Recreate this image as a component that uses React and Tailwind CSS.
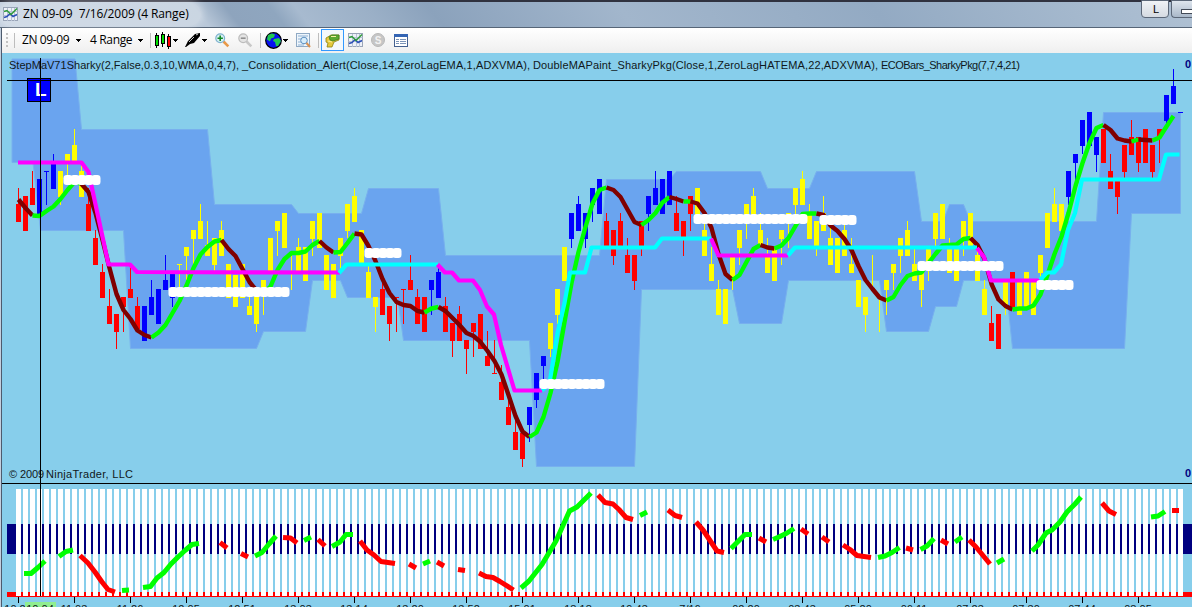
import React from "react";

const BAR = 7;
const FIRST = 16;
const R = "#ff0000";
const B = "#0000ff";
const Y = "#ffff00";

// [colour, high, body top, body bottom, low], one row per bar
const candles = [
  [R,188,204,222,222],[R,196,196,231,231],[R,171,188,205,205],[B,179,179,214,214],[B,171,171,172,205],
  [B,154,163,189,189],[Y,171,171,197,205],[Y,154,154,162,176],[Y,129,145,163,163],[Y,165,171,197,197],
  [R,188,204,231,231],[R,230,238,265,265],[R,264,272,298,298],[R,289,306,324,324],[R,314,314,332,349],
  [R,297,297,307,332],[R,267,289,298,298],[R,297,306,329,329],[B,306,306,341,341],[B,280,297,315,315],
  [B,289,289,324,324],[B,255,280,290,290],[B,273,273,298,307],[Y,264,264,265,287],[Y,247,247,256,280],
  [Y,230,230,239,264],[Y,204,221,239,239],[Y,221,245,256,256],[Y,238,238,265,271],[Y,221,230,256,256],
  [Y,264,264,298,298],[Y,275,275,307,307],[Y,264,264,298,298],[Y,297,306,315,315],[Y,290,290,324,332],
  [Y,280,280,290,315],[Y,238,238,271,271],[Y,221,221,231,256],[Y,213,213,248,248],[Y,253,255,256,290],
  [Y,238,247,271,271],[Y,247,247,281,281],[Y,221,221,239,256],[Y,213,213,248,248],[Y,255,255,290,290],
  [Y,264,264,298,298],[Y,238,238,256,270],[Y,204,204,231,238],[Y,188,196,222,222],[Y,230,230,263,263],
  [Y,266,272,298,298],[Y,297,297,307,332],[R,282,289,315,315],[R,306,306,324,341],[R,297,297,298,332],
  [R,289,289,290,324],[R,255,280,290,290],[R,289,297,324,324],[R,297,297,332,332],[B,280,280,290,315],
  [B,267,272,298,298],[R,297,306,332,332],[R,323,323,341,357],[R,306,314,341,341],[R,340,340,349,374],
  [R,323,323,332,357],[R,314,314,349,349],[R,331,356,366,366],[R,340,373,374,374],[R,365,382,400,400],
  [R,398,407,425,425],[R,420,432,450,450],[R,433,433,459,467],[B,407,407,425,442],[B,373,373,400,408],
  [B,356,356,366,380],[Y,323,323,349,357],[Y,289,289,315,324],[Y,247,247,281,281],[B,213,213,239,248],
  [B,196,204,231,231],[B,213,213,239,248],[B,188,188,205,222],[B,179,179,214,214],[R,213,221,247,247],
  [R,230,230,256,265],[R,213,221,246,246],[R,238,255,273,273],[R,255,255,281,290],[R,221,221,246,256],
  [B,196,196,214,231],[B,171,188,205,205],[B,179,179,214,214],[B,171,171,205,205],[R,196,213,231,231],
  [R,221,221,237,256],[R,196,196,214,231],[Y,188,188,215,215],[Y,223,230,256,256],[Y,247,264,281,281],
  [Y,280,289,315,315],[Y,289,289,324,324],[Y,257,257,280,290],[Y,230,230,248,265],[Y,204,204,215,239],
  [Y,188,196,215,215],[Y,213,230,245,245],[Y,238,256,273,273],[Y,248,248,281,281],[Y,230,230,239,265],
  [Y,213,213,219,248],[Y,188,188,205,214],[Y,171,179,205,205],[Y,204,215,239,239],[Y,221,221,246,256],
  [Y,196,213,231,231],[Y,226,238,265,265],[Y,238,238,273,273],[Y,225,230,256,256],[Y,238,264,273,273],
  [Y,280,280,307,307],[Y,297,297,315,332],[Y,255,288,289,290],[Y,298,299,300,332],[Y,280,280,290,315],
  [Y,264,264,273,290],[Y,238,238,256,273],[Y,221,230,256,256],[Y,248,264,281,281],[Y,272,272,290,307],
  [Y,249,249,262,281],[Y,213,213,239,246],[Y,204,204,239,239],[Y,238,245,273,273],[Y,245,245,281,281],
  [Y,221,221,239,256],[Y,213,213,246,246],[Y,248,255,281,281],[Y,280,289,315,315],[R,306,323,341,341],
  [R,314,314,349,349],[Y,281,281,307,315],[R,272,272,307,307],[Y,281,281,315,315],[Y,272,272,307,307],
  [Y,281,281,315,315],[Y,255,255,273,281],[Y,213,213,248,248],[Y,188,204,222,222],[Y,204,204,231,231],
  [B,171,171,197,205],[B,154,154,163,180],[B,120,120,146,154],[B,112,112,146,146],[B,137,137,155,172],
  [R,129,129,163,163],[R,154,171,189,189],[R,181,181,197,214],[R,145,145,172,180],[R,120,137,155,155],
  [R,137,137,163,172],[R,129,129,163,163],[R,145,145,172,178],[R,129,129,138,163],[B,95,95,121,130],
  [B,69,86,104,104],[B,112,112,113,113],
];
const thin = new Set([39, 122, 123]);

const band =
  "12,59 75,59 81.5,129.5 207.5,129.5 214.5,204.5 291.5,204.5 298.5,213.5 361.5,213.5 368.5,188.5 438.5,188.5 445.5,255.5 599.5,255.5 606.5,179.5 669.5,179.5 676.5,171.5 760.5,171.5 767.5,188.5 809.5,188.5 816.5,171.5 914.5,171.5 921.5,221.5 943,221.5 949.5,204.5 963.5,204.5 970.5,221.5 1096.5,221.5 1103.5,112.5 1180.5,112.5 1180.5,213.5 1131.5,213.5 1124.5,348.5 1012.5,348.5 1005.5,280.5 963.5,280.5 956.5,306.5 935.5,306.5 928.5,331.5 886.5,331.5 879.5,280.5 788.5,280.5 781.5,323.5 739.5,323.5 732.5,289.5 641.5,289.5 634.5,466.5 536.5,466.5 529.5,340.5 403.5,340.5 397.5,297.5 347.5,297.5 340.5,280.5 312.5,280.5 305.5,331.5 263.5,331.5 256.5,348.5 130.5,348.5 123.5,230.5 40.5,230.5 33,162.5 12,162.5";

// Moving average height at each bar
const ma = [
  199.5,208,215.5,216,211,206.5,199,190,182,184,192,213,240,268,294,310,319,330.5,335,337.5,
  332.5,325,313,301,285.5,268,254.5,247,241.5,240,249,256,269,282,290.5,293,286.5,270,259,253,
  253,251.5,245,241,247.5,252.5,252,243,233.5,234.5,246,261,279,293,302,305,306,311,312.5,308.5,
  307,311,318,325,333,336,342,351,361,374.5,395,416,431.5,437,432.5,417,393,362,322,283,
  252,227,203.5,190,187.5,190,197,209.5,222,225,220,213,202.5,197,199,201.5,201.5,203.5,213,228,
  254,274,280,275,262,249,245,247.5,248.5,245.5,238,226,214,213.5,213.5,215,225.5,231,239,250,
  266,280,289,297.5,300.5,297,285,276,273.5,272.5,263,254,245.5,245,244.5,239,238,245,259,284,
  299.5,306,309.5,308.5,308.5,305.5,294.5,275,254,236.5,213,186,163,143,128,125,130,138.5,140.5,141.5,
  139.5,140,140.5,137.5,126.5,116,
];
// Bars at which the average changes direction, starting downward
const turns = [0,2,9,19,29,35,43,45,48,58,60,73,84,89,93,95,96,102,106,108,114,124,136,142,155,159,160,162,165];

const step = [
  ["#ff00ff", "18,162.5 81.5,162.5 88.5,172 108.5,264.5 130,264.5 137,272 340,272.5"],
  ["#00ffff", "339,273 346.5,264.5 438,264.5"],
  ["#ff00ff", "437.5,264.5 445,272.5 452,272.5 459,280.5 473,280.5 480,290 487,306.5 494,314.5 501,345 514.5,390.5 542,390.5"],
  ["#00ffff", "542,390.5 549.5,383 557.5,333 564.5,303 570,272.5 585,272.5 591.5,247.5 655,247.5 662,238.5 711,238.5"],
  ["#ff00ff", "711,238.5 718.5,255.5 788,255.5"],
  ["#00ffff", "788,255.5 795,247.5 977,247.5"],
  ["#ff00ff", "977,248 984,257 991,280.5 1040,280.5"],
  ["#00ffff", "1040,280 1047,272.5 1054,272.5 1061,264.5 1068,230 1075,213 1082,179.5 1159,179.5 1166,154.5 1179.5,154.5"],
];

// [first bar, last bar, top]
const alerts = [
  [7,11,175],[22,38,287],[50,54,248],[75,83,379],[97,112,214],[115,119,215],[129,140,261],[146,150,280],
];

const up = [
  "24,573.5 31,573.5 38,567.5 45,561","59,556.5 66,551.5 73,550","122,590.5 129,590",
  "143,587.5 150.5,586.5 157,578 164,572.5 171,564 178,557 185,550.5 192,544.5 199,543.5",
  "255,556 262,552.5 269,544 276,536","304,540.5 311,537","332,546.5 340,542 346,534.5 353,534.5",
  "423,564 430,561","521,588 529,581 542,564.5 556,541 569.5,511 577,507 591,493","640,515.5 647,512",
  "731,548.5 745,534.5 752,534.5","773,539.5 780,536.5 787,533 794,528.5",
  "878,557.5 885,556 892,552.5 899.5,547.5","920.5,549.5 927,546 934,538.5","955,542 962,537","997,563 1004,559",
  "1032,551 1038,545 1046,533 1052,530 1060,522 1067,512 1075,504 1081,497","1151,517 1158,516 1165,511.5",
];
const down = [
  "80,555.5 88,563 95,572 102,582 108,589.5 115,592","220,542.5 227,548","241,553.5 248,557",
  "283,537.5 290.5,538 297,543","318,539.5 325,546","360,541 367,550 374,555 381,561.5 395,563.5","409,564 416,568",
  "437,562 444,566","458,569.5 465,570.5","479,573 486,576.5 493,577.5 500,581.5 513.5,590",
  "598,495 605,502.5 613,504 619,509.5 626,517.5 633,519.5","668,510 675,515.5 682,517.5",
  "696,522 703,530 717,551 724,552.5","759,538 766,542","801,529 808,534","822,537 829,542",
  "843,545 850,549.5 857,555.5 871,557.5","906,548 913,550","941,540 948,544","969,540 976,547 990,564",
  "1102,503 1109,511 1116,514.5","1172,510.5 1179,510.5",
];

// [text, x, width]
const studies = [
  ["StepMaV71Sharky(2,False,0.3,10,WMA,0,4,7),", 9, 230],
  ["_Consolidation_Alert(Close,14,ZeroLagEMA,1,ADXVMA),", 242, 288],
  ["DoubleMAPaint_SharkyPkg(Close,1,ZeroLagHATEMA,22,ADXVMA),", 533, 345],
  ["ECOBars_SharkyPkg(7,7,4,21)", 881, 139],
];

const times = [
  "10:2","11:03","11:26","12:05","12:51","13:03","13:14","13:20","13:52","15:01","18:18","19:43",
  "7/16","02:20","03:43","05:20","06:11","07:23","07:30","07:44","08:05",
];

function Chart() {
  return (
    <svg className="block h-[554px] w-[1190px] shrink-0 bg-[#87ceeb]" viewBox="2 53 1190 554">
      <polygon points={band} fill="#6aa4ef" stroke="#78b0ee" strokeWidth="1" />
      <g shapeRendering="crispEdges">
        {candles.map(([c, hi, top, bot, lo], i) => (
          <g key={i} fill={c}>
            <rect x={FIRST + 2 + i * BAR} y={hi} width="1" height={lo - hi} />
            {!thin.has(i) && <rect x={FIRST + i * BAR} y={top} width="5" height={bot - top} />}
          </g>
        ))}
      </g>
      <g fill="none" strokeLinejoin="round">
        {turns.slice(0, -1).map((from, k) => (
          <polyline
            key={from}
            strokeWidth="4.4"
            stroke={k % 2 ? "#00ff00" : "#800000"}
            points={ma
              .slice(from, turns[k + 1] + 1)
              .map((y, j) => `${18.5 + (from + j) * BAR},${y}`)
              .join(" ")}
          />
        ))}
        {step.map(([c, p]) => (
          <polyline key={p} stroke={c} strokeWidth="4.2" points={p} />
        ))}
      </g>
      {alerts.map(([a, b, y]) =>
        Array.from({ length: b - a + 1 }, (_, k) => (
          <rect key={`${a}-${k}`} x={14.5 + (a + k) * BAR} y={y} width="9" height="10" rx="3.2" fill="#fff" />
        )),
      )}

      <rect x="27.5" y="78.5" width="23" height="23" fill="#0000ff" stroke="#000" />
      <text x="35" y="96" fill="#fff" fontSize="19" fontWeight="bold" fontFamily="Liberation Sans, sans-serif">L</text>
      <g fill="#101820" fontSize="11" fontFamily="Liberation Sans, sans-serif">
        {studies.map(([label, x, width]) => (
          <text key={x} x={x} y="69" textLength={width}>{label}</text>
        ))}
        <text x="9" y="478" textLength="35">© 2009</text>
        <text x="46" y="478" textLength="87">NinjaTrader, LLC</text>
      </g>
      <g fill="#000080" fontSize="11" fontWeight="bold" fontFamily="Liberation Sans, sans-serif">
        <text x="1185" y="68">0</text>
        <text x="1185" y="477">0</text>
      </g>

      <g shapeRendering="crispEdges">
        <rect x="2" y="483" width="1190" height="1" fill="#000" />
        <rect x="7" y="524" width="1185" height="30" fill="#000080" />
        <rect x="7" y="592" width="1185" height="4" fill="#ff0000" />
        {candles.map((_, i) => (
          <rect key={i} x={FIRST + i * BAR} y="489" width="5" height="107" fill="#fff" />
        ))}
        <rect x="7" y="596" width="1185" height="1" fill="#ff0000" />
      </g>
      <g fill="none" strokeWidth="5" strokeLinejoin="round">
        {up.map((p) => (
          <polyline key={p} points={p} stroke="#00ff00" />
        ))}
        {down.map((p) => (
          <polyline key={p} points={p} stroke="#ff0000" />
        ))}
      </g>

      <g shapeRendering="crispEdges" fill="#000">
        <rect x="7" y="80" width="1185" height="1" />
        <rect x="40" y="58" width="1" height="538" />
        {times.map((t, i) => (
          <rect key={t} x={18 + 56 * i} y="597" width="1" height="6" />
        ))}
      </g>
      <g fill="#101820" fontSize="11" fontFamily="Liberation Sans, sans-serif" textAnchor="middle">
        {times.map((t, i) => (
          <text key={t} x={i ? 18 + 56 * i : 15} y="613">{t}</text>
        ))}
        <rect x="25" y="602" width="31" height="5" fill="#90ee90" />
        <text x="40" y="613">10:04</text>
      </g>
    </svg>
  );
}

function ChartIcon() {
  return (
    <svg className="size-[15px] shrink-0" viewBox="0 0 15 15">
      <rect x=".5" y=".5" width="14" height="13" fill="#eef1f8" stroke="#9aa5b8" />
      <path d="M.5 4.500h14M.5 8.500h14M4.500 1v13M8.500 1v13M11.500 1v13" stroke="#b9c3d6" />
      <path d="M1 10.500l3-1 3-3 3 3 4-2" fill="none" stroke="#2d50b8" strokeWidth="1.500" />
      <path d="M1 4.500l3-1 4 4 3-3 3-3" fill="none" stroke="#2f9c3a" strokeWidth="1.500" />
    </svg>
  );
}

function Arrow({ className }) {
  return (
    <svg className={`h-[3px] w-[5px] shrink-0 ${className}`} viewBox="0 0 5 3" shapeRendering="crispEdges">
      <path d="M0 0h5v1h-5zM1 1h3v1h-3zM2 2h1v1h-1z" fill="#000" />
    </svg>
  );
}

function Magnifier({ plus }) {
  const rim = plus ? "#7fb2cf" : "#bcbcbc";
  return (
    <svg className="size-[15px] shrink-0" viewBox="0 0 15 15">
      <path d="M8.500 8.500l4.800 4.800" stroke={plus ? "#e8994a" : "#c8c8c8"} strokeWidth="2.600" />
      <circle cx="5.200" cy="5.200" r="4.400" fill={plus ? "#d8f0f4" : "#e4e4e4"} stroke={rim} strokeWidth="1.200" />
      <path d={plus ? "M2.500 5.200h5.400M5.200 2.500v5.400" : "M2.800 5.200h4.800"} stroke={plus ? "#128a28" : "#909090"} strokeWidth="1.600" />
    </svg>
  );
}

function Toolbar() {
  return (
    <div className="flex h-[25px] shrink-0 items-center bg-gradient-to-b from-white to-[#efefef] pb-px pl-[4px] font-['Open_Sans',sans-serif] text-[12px] text-black">
      <svg className="h-[15px] w-[2px]" viewBox="0 0 2 15" shapeRendering="crispEdges">
        <path d="M0 0h2v2H0zM0 4h2v2H0zM0 8h2v2H0zM0 12h2v2H0z" fill="#c2c2c2" />
      </svg>
      <div className="ml-[6px] h-[15px] w-px bg-[#bdbdbd]" />
      <span className="ml-[7px] w-[48px] whitespace-nowrap tracking-[-0.4px]">ZN 09-09</span>
      <Arrow className="ml-[6px]" />
      <span className="ml-[9px] w-[43px] whitespace-nowrap tracking-[-0.35px]">4 Range</span>
      <Arrow className="ml-[5px]" />
      <div className="ml-[7px] h-[15px] w-px bg-[#bdbdbd]" />
      <svg className="ml-[3px] h-[17px] w-[18px]" viewBox="0 0 18 17" shapeRendering="crispEdges">
        <path d="M2.500 1v15M8.500 0v15M14.500 2v15" stroke="#000" />
        <path d="M1 3h3v10h-3zM7 2h3v9h-3z" fill="#00e000" stroke="#000" />
        <path d="M13 4h3v10h-3z" fill="#f00" stroke="#000" />
      </svg>
      <Arrow className="ml-[1px]" />
      <svg className="ml-[6px] h-[16px] w-[18px]" viewBox="0 0 18 16">
        <path d="M1 15l3-6 7-7 5-1v3l-6 7-4 1-4 3z" fill="#000" />
        <path d="M5 10l5-5M12 3l2-1" stroke="#c8c8c8" strokeWidth="1" />
      </svg>
      <Arrow className="ml-0" />
      <div className="w-[8px]" />
      <Magnifier plus />
      <div className="w-[8px]" />
      <Magnifier />
      <div className="ml-[7px] h-[15px] w-px bg-[#bdbdbd]" />
      <svg className="ml-[4px] size-[17px]" viewBox="0 0 17 17">
        <circle cx="8.500" cy="8.500" r="7.800" fill="#0710f0" stroke="#000" strokeWidth="1.200" />
        <path d="M3 3l4-1.500 3 1-1 3-3 1-1 3-3-2zM9 7l5-1 2 3-3 5-2 0-1-4-2-1z" fill="#20c850" />
      </svg>
      <Arrow className="ml-[1px]" />
      <svg className="ml-[8px] size-[15px]" viewBox="0 0 15 15">
        <rect x=".5" y=".5" width="13" height="13" fill="#eef5fb" stroke="#8fa9c4" />
        <path d="M2 3h10M2 6h3M2 9h3M2 12h6" stroke="#8fb1d4" />
        <circle cx="8" cy="7.500" r="3.300" fill="#d7edfb" stroke="#5a8ec0" />
        <path d="M10.500 10l3.500 4" stroke="#d99152" strokeWidth="2" />
      </svg>
      <div className="ml-[7px] h-[15px] w-px bg-[#bdbdbd]" />
      <div className="ml-[2px] flex h-[22px] w-[23px] shrink-0 items-center justify-center border border-[#3399ff] bg-[#f4f8fc]">
        <svg className="size-[15px]" viewBox="0 0 15 15">
          <path d="M1 5l5-3 8 0v5l-5 2-2 5H2l1-4-2-1z" fill="#e6c83c" stroke="#8c8414" strokeWidth=".8" />
          <path d="M4 4l3-2 7 0v4l-6 2-3-1z" fill="#5aa832" stroke="#3c7d1c" strokeWidth=".7" />
          <path d="M6 3.500h5M3 8l4 1" stroke="#f6f0a0" />
        </svg>
      </div>
      <div className="w-[4px]" />
      <ChartIcon />
      <svg className="ml-[8px] size-[14px]" viewBox="0 0 14 14">
        <circle cx="7" cy="7" r="6.500" fill="#c6c6c6" stroke="#b8b8b8" />
        <text x="7" y="10.500" textAnchor="middle" fontSize="10" fontWeight="bold" fill="#f2f2f2" fontFamily="Liberation Sans, sans-serif">S</text>
      </svg>
      <svg className="ml-[9px] h-[13px] w-[14px]" viewBox="0 0 14 13" shapeRendering="crispEdges">
        <rect x=".5" y=".5" width="13" height="12" fill="#fff" stroke="#44608f" />
        <rect x="0" y="0" width="14" height="3" fill="#3465b4" />
        <path d="M2 5.500h3M6 5.500h6M2 7.500h3M6 7.500h6M2 9.500h3M6 9.500h6" stroke="#7c94b8" />
      </svg>
    </div>
  );
}

function TitleBar() {
  return (
    <div className="flex h-[28px] shrink-0 items-start justify-between border-t-2 border-b border-t-[#30323f] border-b-[#566577] bg-[linear-gradient(52deg,#c3d0df_0px,#b9c8d9_165px,#8ea4bd_190px,#8fa6bf_225px,#a7bacf_245px,#9bb0c7_300px,#8ba2bc_350px,#a2b6cc_500px,#93aac3_700px,#a9bcd0_900px,#b4c4d5_1000px)]">
      <div className="flex h-[24px] items-center gap-[5px] rounded-full bg-white/25 pl-[3px] pr-3 shadow-[0_0_8px_rgba(255,255,255,0.5)]">
        <ChartIcon />
        <span className="whitespace-pre font-['Open_Sans',sans-serif] text-[12px] tracking-[-0.09px] text-black">
          {"ZN 09-09  7/16/2009 (4 Range)"}
        </span>
      </div>
      <div className="-mt-[2px] flex gap-[2px]">
        <div className="flex h-[18px] w-[28px] items-center justify-center rounded-b-[4px] border border-[#5b6778] bg-gradient-to-b from-[#f0f3f6] to-[#d5dbe2] pl-[2px] font-['Liberation_Sans',sans-serif] text-[11px] text-black">
          L
        </div>
        <div className="flex h-[18px] w-[21px] items-center justify-end rounded-bl-[4px] border border-r-0 border-[#5b6778] bg-gradient-to-b from-[#dfe6ee] to-[#a9b8c9]">
          <div className="mt-[4px] h-[5px] w-[11px] rounded-l-[1px] border border-r-0 border-[#424a57] bg-white" />
        </div>
      </div>
    </div>
  );
}

export default function App() {
  return (
    <div className="flex h-[607px] w-[1192px] flex-col overflow-hidden bg-[#c3d0df]">
      <TitleBar />
      <div className="ml-px flex flex-col border-l border-[#4d5b6e]">
        <Toolbar />
        <Chart />
      </div>
    </div>
  );
}
